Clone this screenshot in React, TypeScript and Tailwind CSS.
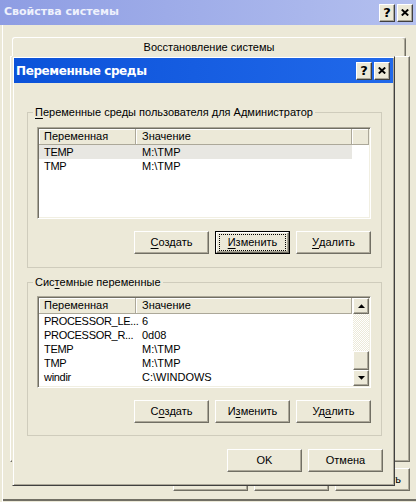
import React from "react";

// classic 3D edges
const raised =
  "bg-[#ece9d8] border border-t-white border-l-white border-r-[#716f64] border-b-[#716f64] shadow-[inset_-1px_-1px_0_#aca899]";

type Row = [string, string];

const userVars: Row[] = [
  ["TEMP", "M:\\TMP"],
  ["TMP", "M:\\TMP"],
];

const systemVars: Row[] = [
  ["PROCESSOR_LE...", "6"],
  ["PROCESSOR_R...", "0d08"],
  ["TEMP", "M:\\TMP"],
  ["TMP", "M:\\TMP"],
  ["windir", "C:\\WINDOWS"],
];

function U({ children }: { children: React.ReactNode }) {
  return <span className="underline underline-offset-[2px]">{children}</span>;
}

function Button({ children, focused = false }: { children: React.ReactNode; focused?: boolean }) {
  if (focused) {
    return (
      <div className="w-[75px] h-[23px] border border-black flex">
        <div className={`flex-1 flex ${raised}`}>
          <div className="flex-1 mx-[2px] my-[1px] border border-dotted border-black flex items-center justify-center leading-[13px]">
            {children}
          </div>
        </div>
      </div>
    );
  }
  return (
    <div className={`w-[75px] h-[23px] flex items-center justify-center leading-[13px] ${raised}`}>
      {children}
    </div>
  );
}

function TitleButton({ kind }: { kind: "help" | "close" }) {
  return (
    <div className="w-[16px] h-[18px] flex items-center justify-center bg-[#ece9d8] border border-t-white border-l-white border-r-[#404040] border-b-[#404040] shadow-[inset_-1px_-1px_0_#aca899]">
      {kind === "help" ? (
        <span className="font-['DejaVu_Sans',sans-serif] font-bold text-[13px] leading-[12px] text-black">?</span>
      ) : (
        <svg width="8" height="7" viewBox="0 0 8 7">
          <path d="M0.8 0.5 L7.2 6.5 M7.2 0.5 L0.8 6.5" stroke="black" strokeWidth="1.9" />
        </svg>
      )}
    </div>
  );
}

function Arrow({ up }: { up: boolean }) {
  return (
    <svg width="7" height="4" viewBox="0 0 7 4">
      <path d={up ? "M0 4h7L3.5 0.3z" : "M0 0h7L3.5 3.7z"} fill="black" />
    </svg>
  );
}

function HeaderCell({ className, children }: { className: string; children?: React.ReactNode }) {
  return (
    <div
      className={`h-[16px] bg-[#ece9d8] border-r border-b border-r-[#aca899] border-b-[#aca899] shadow-[inset_1px_1px_0_#fff] flex items-center leading-[13px] ${className}`}
    >
      {children}
    </div>
  );
}

function ListView({ rows, selected, scroll }: { rows: Row[]; selected?: number; scroll?: boolean }) {
  return (
    <div className="h-[92px] bg-white border border-t-[#aca899] border-l-[#aca899] border-r-white border-b-white p-[1px] shadow-[inset_1px_1px_0_#716f64,inset_-1px_-1px_0_#f1efe2] flex overflow-hidden">
      <div className="flex-1 flex flex-col bg-white">
        <div className="flex">
          <HeaderCell className="w-[97px] pl-[5px]">Переменная</HeaderCell>
          <HeaderCell className="w-[216px] pl-[6px]">Значение</HeaderCell>
          {!scroll && <HeaderCell className="flex-1" />}
        </div>
        {rows.map((r, i) => (
          <div
            key={i}
            className={`w-[313px] h-[14px] flex leading-[14px] ${i === selected ? "bg-[#e8e7e2]" : ""}`}
          >
            <div className="w-[97px] pl-[5px] whitespace-nowrap tracking-[-0.3px]">{r[0]}</div>
            <div className="w-[216px] pl-[6px] whitespace-nowrap">{r[1]}</div>
          </div>
        ))}
      </div>
      {scroll && (
        <div className="w-[16px] flex flex-col">
          <div className={`h-[16px] flex items-center justify-center ${raised}`}>
            <Arrow up />
          </div>
          <div className="h-[37px] bg-[repeating-conic-gradient(#ffffff_0%_25%,#ece9d8_0%_50%)] bg-[length:2px_2px]" />
          <div className={`h-[19px] ${raised}`} />
          <div className={`h-[16px] flex items-center justify-center ${raised}`}>
            <Arrow up={false} />
          </div>
        </div>
      )}
    </div>
  );
}

function Group({
  legend,
  className,
  padTop,
  padBottom,
  children,
}: {
  legend: React.ReactNode;
  className: string;
  padTop: string;
  padBottom: string;
  children: React.ReactNode;
}) {
  return (
    <fieldset className={`ml-[13px] mr-[11px] border border-[#cfccbc] ${className}`}>
      <legend className="ml-[5px] px-[2px] leading-[13px] bg-[#ece9d8]">{legend}</legend>
      <div className={`pl-[9px] pr-[10px] ${padTop} ${padBottom}`}>{children}</div>
    </fieldset>
  );
}

function EnvDialog() {
  return (
    <div className="absolute left-[12px] top-[56px] w-[383px] z-10 bg-[#ece9d8] border border-t-[#ece9d8] border-l-[#ece9d8] border-r-[#404040] border-b-[#404040] p-[1px] shadow-[inset_1px_1px_0_#fff,inset_-1px_-1px_0_#aca899]">
      <div className="h-[25px] flex items-center bg-linear-to-r from-[#0b52d9] to-[#2169ea] pl-[2px] pr-[3px]">
        <span className="flex-1 font-['DejaVu_Sans',sans-serif] font-bold text-[12px] tracking-[-0.4px] text-white">
          Переменные среды
        </span>
        <div className="flex gap-[2px]">
          <TitleButton kind="help" />
          <TitleButton kind="close" />
        </div>
      </div>

      <div className="flex flex-col pt-[23px] pb-[12px]">
        <Group
          legend={
            <>
              <U>П</U>еременные среды пользователя для Администратор
            </>
          }
          className=""
          padTop="pt-[8px]"
          padBottom="pb-[13px]"
        >
          <ListView rows={userVars} selected={0} />
          <div className="mt-[12px] flex justify-end gap-[6px]">
            <Button>
              <U>С</U>оздать
            </Button>
            <Button focused>
              <U>И</U>зменить
            </Button>
            <Button>
              <U>У</U>далить
            </Button>
          </div>
        </Group>

        <Group
          legend={
            <>
              Сис<U>т</U>емные переменные
            </>
          }
          className="mt-[8px]"
          padTop="pt-[7px]"
          padBottom="pb-[12px]"
        >
          <ListView rows={systemVars} scroll />
          <div className="mt-[12px] flex justify-end gap-[6px]">
            <Button>
              С<U>о</U>здать
            </Button>
            <Button>
              И<U>з</U>менить
            </Button>
            <Button>
              Уд<U>а</U>лить
            </Button>
          </div>
        </Group>

        <div className="mt-[13px] pr-[10px] flex justify-end gap-[6px]">
          <Button>OK</Button>
          <Button>Отмена</Button>
        </div>
      </div>
    </div>
  );
}

export default function App() {
  return (
    <div className="relative w-[416px] h-[502px] overflow-hidden bg-[#ece9d8] font-['Liberation_Sans',sans-serif] text-[11px] text-black shadow-[inset_2px_0_0_#ece9d8,inset_3px_0_0_#fff,inset_0_-1px_0_#ece9d8,inset_0_-3px_0_#716f64]">
      <div className="flex flex-col">
        {/* outer window title */}
        <div className="h-[25px] flex items-center bg-linear-to-r from-[#8e9de3] to-[#b4c0ef] pl-[4px] pr-[3px]">
          <span className="flex-1 font-['DejaVu_Sans',sans-serif] font-bold text-[11px] text-[#eef1fc]">
            Свойства системы
          </span>
          <div className="flex gap-[2px]">
            <TitleButton kind="help" />
            <TitleButton kind="close" />
          </div>
        </div>

        {/* tab behind the dialog */}
        <div className="mt-[12px] ml-[12px] w-[394px] h-[19px] rounded-t-[3px] border-t border-l border-r border-t-white border-l-white border-r-[#716f64] shadow-[inset_-1px_0_0_#aca899] flex items-center justify-center leading-[13px]">
          Восстановление системы
        </div>

        {/* tab page */}
        <div className="ml-[10px] w-[400px] h-[406px] border border-t-white border-l-white border-r-[#716f64] border-b-[#716f64] shadow-[inset_-1px_-1px_0_#aca899]" />

        <div className="mt-[6px] pr-[6px] flex justify-end gap-[6px]">
          <Button>OK</Button>
          <Button>Отмена</Button>
          <Button>Применить</Button>
        </div>
      </div>

      <EnvDialog />
    </div>
  );
}
